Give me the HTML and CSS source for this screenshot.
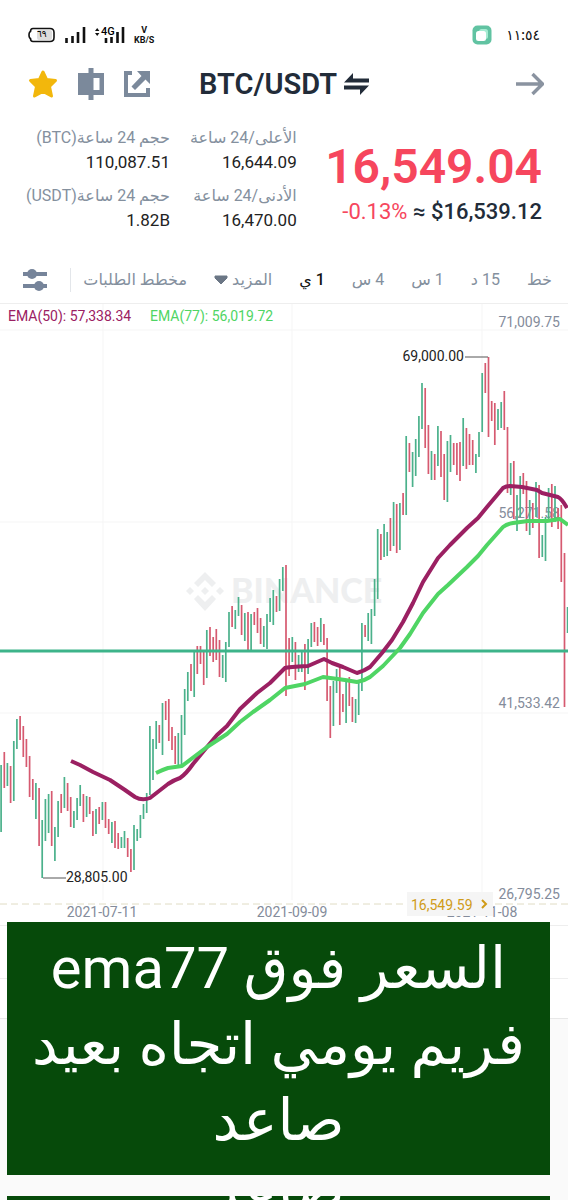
FILE: index.html
```html
<!DOCTYPE html>
<html lang="ar" dir="rtl">
<head>
  <meta charset="UTF-8" />
  <meta name="viewport" content="width=device-width, initial-scale=1" />
  <title>BTC/USDT</title>
  <link rel="stylesheet" href="styles.css">
</head>
<body>
  <div class="status-bar">
    <div class="status-group">
      <span class="clock">١١:٥٤</span>
      <svg class="app-badge" viewBox="0 0 20 20" width="20" height="20">
        <rect x="0.5" y="0.5" width="19" height="19" rx="5" fill="#61c3a2" />
        <rect x="7" y="4" width="9" height="10" rx="2.5" fill="#a5ecd2" />
        <rect x="4" y="6" width="10" height="10" rx="2.5" fill="#fff" />
      </svg>
    </div>
    <div class="status-group status-left">
      <svg class="battery" viewBox="0 0 28 16" width="28" height="16">
        <path d="M5 1.5H22Q26 1.5 26 5.5V10.5Q26 14.5 22 14.5H5Q2.5 14.5 2.5 11.5Q1 11 1 8Q1 5 2.5 4.5Q2.5 1.5 5 1.5Z" fill="#fff" stroke="#111" stroke-width="1.6" />
        <rect x="9" y="3" width="15" height="10" rx="2" fill="#ddd" />
        <text x="9" y="10" class="battery-text">٦٩</text>
      </svg>
      <svg viewBox="0 0 22 18" width="22" height="18">
        <path d="M2.5 12V17M8.5 10V17M14 6V17M20 1V17" stroke="#111" stroke-width="2.6" />
      </svg>
      <svg viewBox="0 0 32 18" width="32" height="18">
        <path d="M1 5L3.2 2L5.4 5ZM1 7L3.2 10L5.4 7Z" fill="#111" />
        <text x="7" y="9" class="net-text">4G</text>
        <path d="M12 12V17M17.5 11V17M23.5 6V17M29 1V17" stroke="#111" stroke-width="2.6" />
      </svg>
      <span class="speed">V<br>KB/S</span>
    </div>
  </div>

  <header class="header">
    <button type="button" class="icon-btn" aria-label="رجوع">
      <svg viewBox="0 0 28 24" width="28" height="24">
        <path d="M0 12H26M16.5 2L26.5 12L16.5 22" fill="none" stroke="#8a93a0" stroke-width="3.4" />
      </svg>
    </button>
    <button type="button" class="pair" dir="ltr">
      <span>BTC/USDT</span>
      <svg viewBox="0 0 26 22" width="26" height="22">
        <path d="M0 9.5L9 0V5.5H25V9.5ZM25 12.5L16 22V16.5H0V12.5Z" fill="#222c39" />
      </svg>
    </button>
    <div class="actions" dir="ltr">
      <button type="button" class="icon-btn" aria-label="المفضلة">
        <svg viewBox="0 0 30 30" width="30" height="30">
          <path d="M15 3L18.5 10.5L27.5 11.5L21.5 17.5L23.5 27L15 22.5L6.5 27L8.5 17.5L2.5 11.5L11.5 10.5Z" fill="#f2b70c" stroke="#f2b70c" stroke-width="3" stroke-linejoin="round" />
        </svg>
      </button>
      <button type="button" class="icon-btn" aria-label="الهامش">
        <svg viewBox="0 0 26 32" width="26" height="32">
          <path d="M0 5H10.5V0H15.5V5H26V27H15.5V32H10.5V27H0ZM15.5 10V22H21.5V10Z" fill="#7b899b" fill-rule="evenodd" />
        </svg>
      </button>
      <button type="button" class="icon-btn" aria-label="مشاركة">
        <svg viewBox="0 0 26 26" width="26" height="26">
          <path d="M8 2H2V24H24V17" fill="none" stroke="#7b899b" stroke-width="4" />
          <path d="M13 0H26V13L21.5 8.5L11 19L7.5 15.5L17.5 5Z" fill="#7b899b" />
        </svg>
      </button>
    </div>
  </header>

  <section class="ticker">
    <div class="price-box" dir="ltr">
      <div class="price">16,549.04</div>
      <div class="price-sub"><span class="down">-0.13%</span> ≈ $16,539.12</div>
    </div>
    <dl class="stats">
      <div class="stat">
        <dt>الأعلى/24 ساعة</dt>
        <dd>16,644.09</dd>
      </div>
      <div class="stat">
        <dt>حجم 24 ساعة(BTC)</dt>
        <dd>110,087.51</dd>
      </div>
      <div class="stat">
        <dt>الأدنى/24 ساعة</dt>
        <dd>16,470.00</dd>
      </div>
      <div class="stat">
        <dt>حجم 24 ساعة(USDT)</dt>
        <dd>1.82B</dd>
      </div>
    </dl>
  </section>

  <nav class="tabs">
    <div class="tab-list">
      <button type="button" class="tab">خط</button>
      <button type="button" class="tab">15 د</button>
      <button type="button" class="tab">1 س</button>
      <button type="button" class="tab">4 س</button>
      <button type="button" class="tab active">1 ي</button>
      <button type="button" class="tab">المزيد
        <svg viewBox="0 0 14 10" width="14" height="10"><path d="M1 1H13V3L7 9L1 3Z" fill="#6b7685" stroke="#6b7685" stroke-linejoin="round" /></svg>
      </button>
      <button type="button" class="tab">مخطط الطلبات</button>
    </div>
    <button type="button" class="settings" aria-label="الإعدادات">
      <svg viewBox="0 0 24 24" width="24" height="24">
        <path d="M0 6H24M0 18H24" stroke="#76849a" stroke-width="4" />
        <circle cx="9" cy="6" r="5" fill="#76849a" />
        <circle cx="16" cy="18" r="5" fill="#76849a" />
      </svg>
    </button>
  </nav>

  <svg class="chart" viewBox="0 304 568 618">
    <path class="grid" d="M0 330H568M0 522H568M0 713H568M103 304V900M292 304V900M482 304V900" />

    <g class="watermark">
      <path d="M205 572L216 583L212 587L205 580L198 587L194 583ZM190 587L194 591L190 595L186 591ZM205 587L209 591L205 595L201 591ZM220 587L224 591L220 595L216 591ZM194 599L198 595L205 602L212 595L216 599L205 611Z" />
      <text x="231" y="603">BINANCE</text>
    </g>

    <path class="last-line" d="M0 904H568" />
    <g class="axis">
      <text x="560" y="327" text-anchor="end">71,009.75</text>
      <text x="560" y="518" text-anchor="end">56,271.58</text>
      <text x="560" y="708" text-anchor="end">41,533.42</text>
      <text x="560" y="899" text-anchor="end">26,795.25</text>
      <text x="102" y="917" text-anchor="middle">2021-07-11</text>
      <text x="292" y="917" text-anchor="middle">2021-09-09</text>
      <text x="482" y="917" text-anchor="middle">2021-11-08</text>
    </g>

    <path id="candlesUp" class="candle-up" />
    <path id="candlesDown" class="candle-down" />

    <path class="marker" d="M465 357H488M43 878H66" />
    <text class="marker-text" x="464" y="361" text-anchor="end">69,000.00</text>
    <text class="marker-text" x="66" y="882">28,805.00</text>

    <path class="level" d="M0 651H568" />
    <path class="ema50" d="M71 761L80 765L93 772L110 780L125 790L135 797Q142 801 150 798L168 784Q174 780 180 778Q186 774 193 764L207 747L217 735L227 726L240 709L257 693L270 683L285 668Q288 667 308 666L324 659L332 663L343 667L357 673Q364 671 370 667L382 653L392 640L403 622L413 603L423 582L438 558L450 545L467 528L478 518L487 507L503 488Q506 486 510 486L522 487L537 490L542 493L558 497Q562 499 567 508" />
    <path class="ema77" d="M156 773Q162 770 168 768L182 766L207 747L227 734L240 722L253 712L270 700L285 688L305 684L323 677L345 680L357 682Q364 681 370 677L383 666L400 648L410 634L423 613L438 594L448 585L467 567L478 556L487 545L503 527Q507 524 513 523L528 521L547 521L560 519L568 525" />

    <text class="legend50" x="8" y="321">EMA(50): 57,338.34</text>
    <text class="legend77" x="150" y="321">EMA(77): 56,019.72</text>

    <rect x="407" y="892" width="86" height="24" fill="#f5f5f5" />
    <text class="last-price" x="411" y="910">16,549.59</text>
    <path class="last-arrow" d="M482 900L486 904L482 908" />
  </svg>

  <main class="bottom">
    <div class="panel">
      <div class="panel-row"></div>
      <div class="panel-row"></div>
    </div>
    <div class="captions">
      <p class="caption">السعر فوق ema77<br>فريم يومي اتجاه بعيد<br>صاعد</p>
      <p class="caption next"><span class="scrolled">صاعد</span></p>
    </div>
  </main>

  <script src="chart.js"></script>
</body>
</html>
```
FILE: chart.js
```js
// u = up, d = down, then high and low of each day
const candles = `
u765-832 d752-788 u763-786 d766-803 u741-801 u719-749 d716-740 d726-757 d739-767 d756-797
d779-800 u783-819 d788-846 u820-878 u799-841 u794-833 d791-846 u827-861 u801-837 d794-813
u777-808 d783-811 d797-827 u811-828 u798-820 u785-806 d794-822 u796-817 d797-814 d811-836
u809-834 d807-824 u802-820 d802-828 d819-834 u822-843 d821-848 d833-849 u837-848 u831-848
d838-857 d849-872 u825-870 u829-841 u815-838 u804-819 u793-813 u726-795 u739-780 u721-749
d725-743 u703-755 d701-720 d699-741 d727-750 d736-764 u733-766 u715-765 u689-735 u672-701
d664-691 u651-697 d646-674 d646-664 d651-685 u630-678 d627-656 d637-662 d629-660 d640-677
u655-678 u642-682 u612-647 d606-627 u610-629 u597-616 d605-635 u613-641 d612-650 u614-650
d612-625 d608-633 d618-644 u626-647 u614-649 u598-622 u590-625 d596-612 u579-611 u567-591
d565-696 d638-676 u637-662 d642-680 u655-672 u651-672 d644-690 u639-674 u623-647 d622-642
d627-646 u618-642 d624-645 d638-701 d686-738 u681-726 u669-693 d667-725 d694-712 u680-723
d677-706 d697-722 u699-723 u680-715 u623-691 d625-637 u613-641 u609-644 u579-616 u529-599
d534-560 u524-557 u532-556 d518-551 u502-546 d504-553 u503-550 d493-515 u436-515 d443-472
u452-487 u439-476 u416-457 u383-429 d388-448 d425-474 u451-480 d454-480 u426-466 d431-477
d454-500 u441-502 u435-472 d443-465 d443-475 d442-481 u418-466 d428-469 d434-465 d440-465
u454-473 u432-457 u373-432 d363-393 d357-437 d401-421 d403-445 u409-430 u402-428 d391-430
d427-493 u463-495 d461-519 u495-531 u476-517 d473-494 d481-531 u500-535 d503-528 u482-517
d485-558 u535-557 u517-561 u488-519 d484-527 u486-522 d508-529 d505-582 d553-707 u607-633
`.trim().split(/\s+/);

const step = 3.165;
const paths = { u: "", d: "" };

candles.forEach((candle, i) => {
  const [high, low] = candle.slice(1).split("-");
  const x = (1.1 + i * step).toFixed(1);
  paths[candle[0]] += `M${x} ${high}V${low}`;
});

document.getElementById("candlesUp").setAttribute("d", paths.u);
document.getElementById("candlesDown").setAttribute("d", paths.d);
```
FILE: styles.css
```css
* {
  box-sizing: border-box;
}

body {
  margin: 0;
  height: 100vh;
  background: #fafafa;
  color: #222c39;
  font-family: Roboto, "DejaVu Sans", sans-serif;
  overflow: hidden;
}

button {
  padding: 0;
  border: none;
  background: none;
  color: inherit;
  font: inherit;
  cursor: pointer;
}

svg {
  display: block;
}

.status-bar {
  display: flex;
  justify-content: space-between;
  align-items: center;
  height: 60px;
  padding: 10px 28px 0;
  background: #fff;
  color: #111;
}

.status-group {
  display: flex;
  align-items: center;
  gap: 14px;
}

.status-left {
  flex-direction: row-reverse;
  gap: 8px;
}

.clock {
  font-size: 14px;
  font-weight: 500;
}

.battery-text {
  font-size: 9px;
  direction: ltr;
}

.net-text {
  font-size: 11px;
  font-weight: 500;
  direction: ltr;
}

.speed {
  font-size: 9px;
  line-height: 10px;
  font-weight: 700;
  text-align: center;
}

.header {
  display: flex;
  justify-content: space-between;
  align-items: center;
  height: 48px;
  padding: 0 24px 0 28px;
  background: #fff;
}

.pair {
  display: flex;
  align-items: center;
  gap: 7px;
  margin-right: auto;
  margin-left: 49px;
  font-size: 29px;
  font-weight: 600;
}

.actions {
  display: flex;
  align-items: center;
  gap: 20px;
}

.ticker {
  display: flex;
  justify-content: space-between;
  padding: 18px 26px 0;
  height: 148px;
  background: #fff;
}

.price-box {
  text-align: right;
}

.price {
  margin-top: 14px;
  color: #f6465d;
  font-size: 48px;
  line-height: 54px;
  font-weight: 600;
}

.price-sub {
  font-size: 22px;
  line-height: 36px;
  font-weight: 500;
}

.down {
  color: #f6465d;
  font-weight: 400;
}

.stats {
  display: grid;
  grid-template-columns: auto auto;
  gap: 10px 20px;
  align-content: start;
  margin: 0;
}

.stat {
  white-space: nowrap;
}

.stat dt {
  color: #84909e;
  font-size: 16px;
  line-height: 24px;
}

.stat dd {
  margin: 0;
  color: #222;
  font-size: 17px;
  line-height: 24px;
  direction: ltr;
  text-align: right;
}

.tabs {
  display: flex;
  justify-content: space-between;
  align-items: center;
  height: 48px;
  padding: 0 16px 0 23px;
  border-bottom: 1px solid #eee;
  background: #fff;
}

.tab-list {
  display: flex;
  align-items: center;
  gap: 27px;
}

.tab {
  display: flex;
  align-items: center;
  gap: 4px;
  color: #84909e;
  font-size: 16px;
  white-space: nowrap;
}

.tab.active {
  color: #111;
  font-weight: 500;
}

.settings {
  padding-right: 23px;
  border-right: 1px solid #e3e6ea;
}

.chart {
  width: 100%;
  height: auto;
  background: #fff;
  font-size: 14px;
}

.chart text {
  direction: ltr;
}

.grid {
  stroke: #f5f5f5;
}

.watermark {
  fill: #eeeff0;
  font-family: Lato, sans-serif;
  font-size: 34px;
  font-weight: 900;
}

.axis {
  fill: #848c9b;
}

.candle-up {
  stroke: #4bb18b;
  stroke-width: 1.7;
}

.candle-down {
  stroke: #d65a70;
  stroke-width: 1.7;
}

.marker {
  fill: none;
  stroke: #555;
}

.marker-text {
  fill: #222;
}

.level {
  stroke: #3db48a;
  stroke-width: 3;
}

.ema50,
.ema77 {
  fill: none;
  stroke: #9b2062;
  stroke-width: 4;
  stroke-linejoin: round;
}

.ema77 {
  stroke: #4fd564;
}

.legend50 {
  fill: #9b2062;
}

.legend77 {
  fill: #4fd564;
}

.last-line {
  stroke: #e0dcc4;
  stroke-dasharray: 7 4;
}

.last-price {
  fill: #d09b18;
}

.last-arrow {
  fill: none;
  stroke: #d09b18;
  stroke-width: 2;
}

/* captions are stacked over the empty panel */
.bottom {
  display: grid;
}

.panel,
.captions {
  grid-area: 1 / 1;
}

.panel {
  align-self: start;
  padding-top: 3px;
  border-bottom: 1px solid #e8e8e8;
  background: #fff;
}

.panel-row {
  height: 53px;
  border-top: 1px solid #eee;
}

.panel-row + .panel-row {
  height: 40px;
}

.captions {
  padding: 0 18px 0 7px;
}

.caption {
  margin: 0 0 21px;
  padding: 8px 10px 17px;
  background: #064a0a;
  color: #fff;
  font-size: 58px;
  line-height: 76px;
  text-align: center;
}

.caption.next {
  padding: 0 10px;
  overflow: hidden;
}

/* its text is already half scrolled out of the box */
.scrolled {
  display: block;
  margin-top: -46px;
}
```
